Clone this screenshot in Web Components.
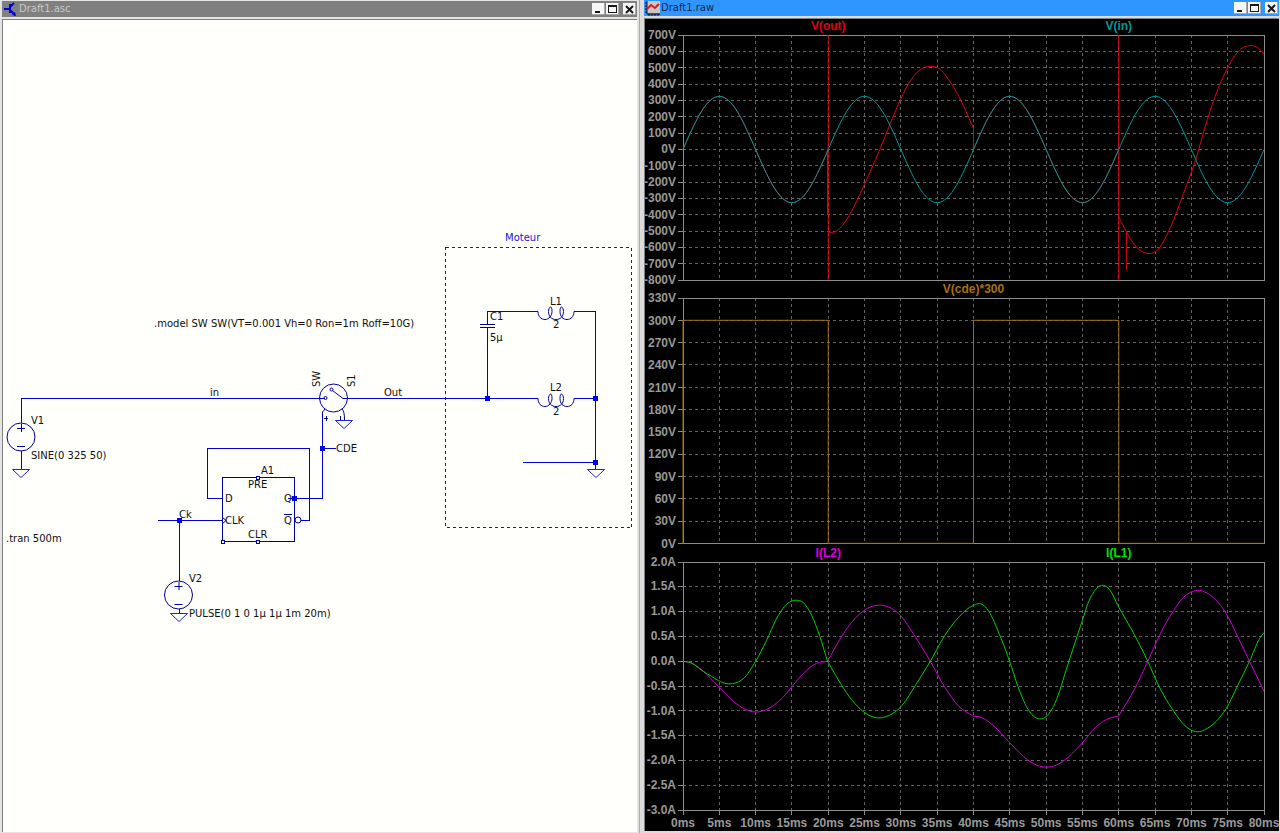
<!DOCTYPE html>
<html lang="fr">
<head>
<meta charset="utf-8">
<title>Draft1</title>
<style>
  html, body { margin: 0; }
  body { background: #dcdcdc; font-family: "DejaVu Sans", sans-serif; font-size: 10px; }
</style>
</head>
<body>
<sim-desk>
  <sim-window slot="left" label="Draft1.asc">
    <svg slot="icon" width="16" height="16" viewBox="0 0 16 16" fill="none" stroke="#0000e0" stroke-width="2"><path d="M2 8h5M8 3v9M8 6l4-4M8 9l5 5"/><path d="M14 15l-4-1 3-3z" fill="#0000e0" stroke="none"/></svg>
    <schematic-sheet></schematic-sheet>
  </sim-window>
  <sim-window slot="right" label="Draft1.raw" active>
    <svg slot="icon" width="16" height="16" viewBox="0 0 16 16"><path fill="#c8c8cc" d="M3 1h13v12H3z"/><path d="M3 1v13h13M1 3h2M1 6h2M1 9h2M1 12h2M5 14v2M8 14v2M11 14v2M14 14v2" stroke="#201010" fill="none"/><path d="M3 9l4-4 4 3 4-4" stroke="#e01818" stroke-width="2" fill="none"/></svg>
    <wave-viewer></wave-viewer>
  </sim-window>
</sim-desk>

<template id="desk">
  <style>
    :host { display: grid; grid-template-columns: minmax(0, 1fr) minmax(0, 1fr); min-height: 100vh; }
    .left, .right { display: flex; box-sizing: border-box; }
    .left { padding: 1px 2px 1px 2px; border-right: 1px solid #a8a8a8; background: #e4e4e4; }
    .right { padding: 0 1px 2px 4px; background: #dcdcdc; }
    ::slotted(*) { flex: 1; min-width: 0; }
  </style>
  <div class="left"><slot name="left"></slot></div>
  <div class="right"><slot name="right"></slot></div>
</template>

<template id="window">
  <style>
    :host { display: flex; flex-direction: column; }
    header { display: flex; align-items: center; height: 16px; gap: 1px; padding-right: 1px; background: #808080; color: #c8c8c8; margin-bottom: 2px; }
    :host([active]) header { background: #3096ff; color: #10284c; }
    h1 { flex: 1; margin: 0; font-size: 10px; font-weight: 400; line-height: 16px; }
    .icon { display: flex; width: 16px; }
    button { width: 13px; height: 12px; padding: 0; border: 0; background: #f6f6f6; box-shadow: inset -1px -1px #a8a8a8; display: flex; }
    button:last-child { margin-left: 3px; }
    button svg { width: 13px; height: 12px; fill: none; stroke: #181818; shape-rendering: crispEdges; }
    button:last-child svg { stroke-width: 2; shape-rendering: auto; }
    main { flex: 1; display: flex; border-top: 1px solid #808080; border-left: 1px solid #808080; }
    ::slotted(:not([slot])) { flex: 1; min-width: 0; }
  </style>
  <header>
    <span class="icon"><slot name="icon"></slot></span><h1></h1>
    <button type="button" aria-label="Minimize"><svg><path d="M3 8h5v2H3z" fill="#181818" stroke="none"/></svg></button>
    <button type="button" aria-label="Maximize"><svg><path d="M2.5 2.500h8v7h-8zM2 3.500h8"/></svg></button>
    <button type="button" aria-label="Close"><svg><path d="M3 3l7 7M10 3l-7 7"/></svg></button>
  </header>
  <main><slot></slot></main>
</template>

<template id="sheet">
  <style>
    :host { display: flex; background: #fffffb; min-height: 640px; }
    svg { flex: 1; width: 100%; min-height: 640px; }
    .wire { fill: none; stroke: #0000d4; shape-rendering: crispEdges; }
    .part { fill: none; stroke: #000098; }
    .gnd { fill: none; stroke: #2020d8; }
    .dot { fill: #0000f0; }
    .pin { fill: #fffffb; stroke: #0000d0; shape-rendering: crispEdges; }
    .box { fill: none; stroke: #1414c0; stroke-dasharray: 3 3; shape-rendering: crispEdges; }
    text { font: 10px "DejaVu Sans", sans-serif; fill: #101010; }
    .note { fill: #1818d0; }
  </style>
  <svg role="img" aria-label="Schéma">
    <defs>
      <g id="coil"><path class="part" d="M0 0C0 5 3 8 7 8S14 4 14 0C14 -3 13.500 -4.500 12.500 -4.500S10.500 -2 10.500 0C10.500 5 13.500 8 18 8S25.500 5 25.500 0C25.500 -2 24.500 -4.500 23.500 -4.500S22 -3 22 0C22 5 25 8 29 8S36 5 36 0"/></g>
      <g id="source"><circle class="part" r="14"/><path class="part" d="M-4 -8.500H4M.5 -13V-5M-4 9.500H4"/></g>
      <path id="ground" class="gnd" d="M-8.500 .5H8.500L0 8.500Z"/>
      <rect id="node" class="dot" x="-2" y="-2" width="5" height="5"/>
      <rect id="stub" class="pin" x="-1" y="-1" width="3" height="3"/>
    </defs>
    <g transform="translate(-3 -20)">
      <path class="wire" d="M21.500 423V398.500H325M21.500 451V469M158 520.500H222M179.500 520V581M179.500 609V613M222 498.500H207.500V448.500H309.500V520.500H301M288 498.500H322.500V412M322 448.500H336M344 398.500H538M487.500 398V328M487.500 324V311.500H538M574 311.500H596M595.500 311V469M574 398.500H596M523 462.500H596"/>
      <rect class="box" x="445.500" y="247.500" width="186" height="280"/>
      <path class="part" d="M222.500 477.500H294.500V541.500H222.500ZM480 324.500H495M480 327.500H495M284 514.500H292" shape-rendering="crispEdges"/>
      <path class="part" d="M222 517L226 520.500L222 524M284 514.500H292"/>
      <circle class="part" cx="298" cy="520" r="3"/>
      <circle class="part" cx="333.500" cy="398" r="14"/>
      <circle class="part" cx="325.500" cy="398" r="1.500"/><circle class="part" cx="331.500" cy="389.500" r="1.500"/>
      <path class="part" d="M332.500 390.500L343 398.500H347M322.500 412L325 409M342 409Q344.500 411 344.500 420M324 418.500H328M326.500 416V421M340.500 416V420"/>
      <use href="#source" x="21" y="437"/><use href="#source" x="178.500" y="595"/>
      <use href="#ground" x="21" y="469"/><use href="#ground" x="179" y="613"/><use href="#ground" x="344" y="420"/><use href="#ground" x="596" y="469"/>
      <use href="#coil" x="538" y="311.500"/><use href="#coil" x="538" y="398.500"/>
      <use href="#node" x="179" y="520"/><use href="#node" x="294" y="498"/><use href="#node" x="322" y="448"/><use href="#node" x="487" y="398"/><use href="#node" x="595" y="398"/><use href="#node" x="595" y="462"/>
      <use href="#stub" x="257.500" y="477"/><use href="#stub" x="257.500" y="541"/><use href="#stub" x="222" y="541"/>
      <text class="note" x="505" y="241">Moteur</text>
      <text x="154" y="327">.model SW SW(VT=0.001 Vh=0 Ron=1m Roff=10G)</text>
      <text x="210" y="396">in</text><text x="384" y="396">Out</text>
      <text x="31" y="424">V1</text><text x="31" y="459">SINE(0 325 50)</text>
      <text x="6" y="542">.tran 500m</text>
      <text x="179" y="518">Ck</text><text x="189" y="582">V2</text><text x="189" y="617">PULSE(0 1 0 1µ 1µ 1m 20m)</text>
      <text x="261" y="474">A1</text><text x="248" y="488">PRE</text><text x="248" y="538">CLR</text>
      <text x="225" y="502">D</text><text x="225" y="524">CLK</text><text x="284" y="502">Q</text><text x="284" y="524">Q</text>
      <text x="336" y="452">CDE</text>
      <text transform="translate(320 387) rotate(-90)">SW</text><text transform="translate(355 387) rotate(-90)">S1</text>
      <text x="490" y="320">C1</text><text x="490" y="341">5µ</text>
      <text x="550" y="305">L1</text><text x="553" y="328">2</text><text x="550" y="391">L2</text><text x="553" y="415">2</text>
    </g>
  </svg>
</template>

<template id="viewer">
  <style>
    :host { display: flex; flex-direction: column; gap: 2px; background: #000; font: bold 12px/16px "Liberation Sans", sans-serif; color: #999; }
    wave-pane { flex: 1 1 0; }
    wave-pane:last-child { flex: 1 1 24px; }
  </style>
  <wave-pane data-pane="0"></wave-pane>
  <wave-pane data-pane="1"></wave-pane>
  <wave-pane data-pane="2"></wave-pane>
</template>

<template id="pane">
  <style>
    :host { display: grid; grid-template: 16px minmax(120px, 1fr) auto / 38px minmax(0, 1fr) 15px; }
    .names { grid-column: 2; display: flex; justify-content: space-around; }
    .names span { width: 0; display: flex; justify-content: center; white-space: nowrap; line-height: 14px; }
    .scale { grid-area: 2 / 1; display: flex; flex-direction: column; justify-content: space-between; padding-right: 7px; white-space: nowrap; }
    .scale span { height: 0; line-height: 0; display: flex; justify-content: flex-end; }
    .plot { grid-area: 2 / 2; position: relative; min-height: 0; }
    svg { position: absolute; inset: 0; width: 100%; height: 100%; overflow: visible; fill: none; }
    .grid { stroke: #626262; stroke-dasharray: 3 3; shape-rendering: crispEdges; }
    .axis { stroke: #8c8c8c; shape-rendering: crispEdges; }
    .curves path { vector-effect: non-scaling-stroke; }
    .curves .edge { shape-rendering: crispEdges; }
    .times { grid-area: 3 / 2; display: flex; justify-content: space-between; padding-top: 5px; }
    .times span { width: 0; display: flex; justify-content: center; white-space: nowrap; }
  </style>
  <div class="names"></div>
  <div class="scale"></div>
  <div class="plot"><svg class="lines"></svg><svg class="curves" preserveAspectRatio="none"></svg></div>
</template>

<script>
  const sine = (from, to) => {
    const out = [];
    for (let t = from; t <= to; t += 0.25) out.push(t, 325 * Math.sin(Math.PI * t / 10));
    return out;
  };
  // Each trace is a list of runs; a run is a flat list of time (ms) and value.
  const PANES = [
    { top: 700, bottom: -800, step: 100, unit: 'V', digits: 0, traces: [
      { name: 'V(out)', ink: '#e00014', label: '#e00014', runs: [
        sine(0, 20), [20, 700, 20, -800], [19.900, 0, 19.900, -400],
        [20.100, -508, 20.600, -508, 21.400, -490, 22.200, -450, 23.130, -384, 25, -212, 27.100, 0, 28.600, 165, 30, 311, 31.350, 423, 32.700, 490, 34, 508, 35.150, 498, 36.860, 409, 38.140, 311, 40, 130], [40, 130, 40, 0],
        sine(40, 60), [60, 700, 60, -800],
        [60, -410, 61.050, -504, 62.900, -616, 64.070, -636, 65.200, -620, 67.150, -473, 68.900, -270, 70.640, -55, 71.900, 140, 73.150, 310, 75.050, 504, 76.500, 602, 78, 635, 79, 627, 80, 585], [61.050, -504, 61.050, -738]] },
      { name: 'V(in)', ink: '#009898', label: '#009898', runs: [sine(0, 80)] } ] },
    { top: 330, bottom: 0, step: 30, unit: 'V', digits: 0, traces: [
      { name: 'V(cde)*300', ink: '#a07010', label: '#a87010', runs: [[0, 0, 0, 300], [0, 300, 20, 300], [20, 300, 20, 0], [20, 0, 40, 0], [40, 0, 40, 300], [40, 300, 60, 300], [60, 300, 60, 0], [60, 0, 80, 0]] } ] },
    { top: 2, bottom: -3, step: 0.5, unit: 'A', digits: 1, times: true, traces: [
      { name: 'I(L2)', ink: '#d000d0', label: '#e000e0', runs: [
        [0, 0, 1.100, -.03, 2.750, -.19, 4.900, -.51, 7.300, -.85, 8.950, -.99, 10.100, -1.02, 11.500, -.97, 13.800, -.72, 15, -.51, 17, -.18, 18.400, -.04, 19.900, 0],
        [19.900, 0, 21.800, .49, 23.200, .78, 24.900, 1.02, 25.900, 1.1, 27, 1.13, 28.200, 1.1, 30.100, .9, 31.700, .56, 34.050, 0, 36, -.51, 38, -.91, 39.900, -1.1],
        [39.900, -1.1, 41.100, -1.13, 42.700, -1.29, 45, -1.64, 47.500, -1.99, 49.100, -2.11, 50.100, -2.13, 51.400, -2.09, 53.500, -1.87, 55, -1.64, 56.900, -1.32, 58.300, -1.17, 60, -1.1],
        [60, -1.1, 62.200, -.55, 64, 0, 65.600, .52, 67.500, 1.01, 68.800, 1.27, 70.200, 1.41, 70.900, 1.43, 71.800, 1.4, 73.200, 1.26, 74.800, .96, 76.400, .49, 78, 0, 80, -.6]] },
      { name: 'I(L1)', ink: '#00d000', label: '#00e000', runs: [
        [0, 0, 1.100, -.03, 2.750, -.2, 3.900, -.3, 4.900, -.39, 6.050, -.45, 7.100, -.44, 8.300, -.35, 10, 0, 11.500, .42, 12.850, .85, 14, 1.11, 14.900, 1.21, 15.600, 1.23, 16.500, 1.19, 17.700, .93, 18.800, .52, 19.900, 0],
        [19.900, 0, 21.800, -.47, 23.200, -.77, 24.900, -1.02, 26.200, -1.12, 27, -1.14, 28, -1.11, 30.100, -.9, 32.100, -.46, 34.050, 0, 36, .51, 38.100, .91, 39.900, 1.12, 41.300, 1.14, 42, 1.03, 43.800, .46, 45, -.01, 46.100, -.5, 47.700, -1.01, 49.100, -1.16, 50.100, -1.1, 51.200, -.85, 53, -.06, 55, .83, 55.800, 1.18, 56.900, 1.46, 57.900, 1.53, 58.700, 1.45, 60, 1.09],
        [60, 1.09, 61.950, .59, 64, 0, 65.600, -.52, 67.500, -.99, 69.300, -1.32, 70.200, -1.4, 70.900, -1.42, 71.800, -1.38, 73.400, -1.21, 74.800, -.95, 76.400, -.48, 78, 0, 79.400, .46, 80, .58]] } ] }
  ];

  // Cubic Hermite through unevenly spaced samples, written as Béziers.
  function curve(run, top) {
    const p = [];
    for (let i = 0; i < run.length; i += 2) p.push([run[i], top - run[i + 1]]);
    let d = `M${p[0]}`;
    if (p.length === 2) return `${d}L${p[1]}`;
    const secant = i => (p[i + 1][1] - p[i][1]) / (p[i + 1][0] - p[i][0]);
    const last = p.length - 1;
    const slope = p.map((q, i) => {
      if (i === 0) return secant(0);
      if (i === last) return secant(last - 1);
      const before = q[0] - p[i - 1][0], after = p[i + 1][0] - q[0];
      return (secant(i - 1) * after + secant(i) * before) / (before + after);
    });
    for (let i = 0; i < last; i++) {
      const [x, y] = p[i], [u, v] = p[i + 1], h = (u - x) / 3;
      d += `C${x + h} ${y + slope[i] * h} ${u - h} ${v - slope[i + 1] * h} ${u} ${v}`;
    }
    return d;
  }

  class Base extends HTMLElement {
    constructor(id) {
      super();
      this.attachShadow({ mode: 'open' }).append(document.getElementById(id).content.cloneNode(true));
    }
    $(sel) { return this.shadowRoot.querySelector(sel); }
  }
  class SimDesk extends Base { constructor() { super('desk'); } }
  class SimWindow extends Base {
    constructor() { super('window'); }
    connectedCallback() { this.$('h1').textContent = this.getAttribute('label'); }
  }
  class SchematicSheet extends Base { constructor() { super('sheet'); } }
  class WavePane extends Base {
    constructor() { super('pane'); }
    connectedCallback() {
      const cfg = PANES[this.dataset.pane], range = cfg.top - cfg.bottom, n = Math.round(range / cfg.step);
      this.$('.names').innerHTML = cfg.traces.map(t => `<span style="color:${t.label}">${t.name}</span>`).join('');
      let scale = '', lines = '';
      for (let i = 1; i < 16; i++) lines += `<line class="grid" x1="${i * 6.25}%" x2="${i * 6.25}%" y1="0" y2="100%"/>`;
      for (let i = 0; i <= n; i++) {
        const y = i / n * 100;
        scale += `<span>${(cfg.top - i * cfg.step).toFixed(cfg.digits)}${cfg.unit}</span>`;
        if (i && i < n) lines += `<line class="grid" x1="0" x2="100%" y1="${y}%" y2="${y}%"/>`;
        lines += `<line class="axis" x1="-5" x2="0" y1="${y}%" y2="${y}%"/>`;
      }
      lines += '<rect class="axis" width="100%" height="100%"/>';
      if (cfg.times) {
        lines += '<svg y="100%">' + Array.from({ length: 17 }, (_, i) => `<line class="axis" x1="${i * 6.25}%" x2="${i * 6.25}%" y1="0" y2="5"/>`).join('') + '</svg>';
        const row = document.createElement('div');
        row.className = 'times';
        row.innerHTML = Array.from({ length: 17 }, (_, i) => `<span>${i * 5}ms</span>`).join('');
        this.shadowRoot.append(row);
      }
      this.$('.scale').innerHTML = scale;
      this.$('.lines').innerHTML = lines;
      const svg = this.$('.curves');
      svg.setAttribute('viewBox', `0 0 80 ${range}`);
      svg.innerHTML = cfg.traces.map(t => t.runs.map(r => `<path${r.length === 4 ? ' class="edge"' : ''} stroke="${t.ink}" d="${curve(r, cfg.top)}"/>`).join('')).join('');
    }
  }
  class WaveViewer extends Base { constructor() { super('viewer'); } }

  customElements.define('wave-pane', WavePane);
  customElements.define('wave-viewer', WaveViewer);
  customElements.define('schematic-sheet', SchematicSheet);
  customElements.define('sim-window', SimWindow);
  customElements.define('sim-desk', SimDesk);
</script>
</body>
</html>
